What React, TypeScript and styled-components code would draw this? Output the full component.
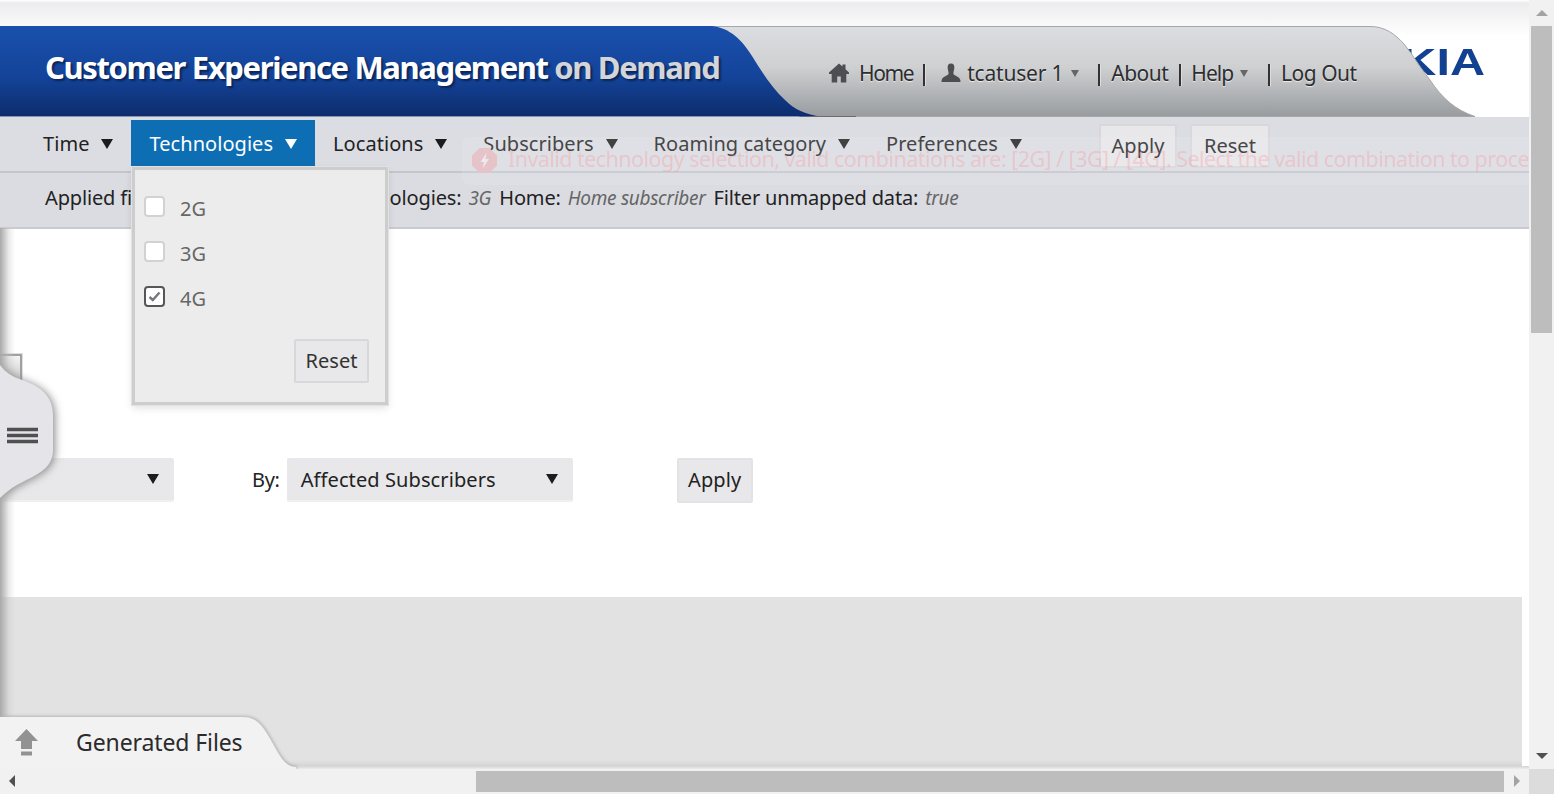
import React from "react";
import styled, { createGlobalStyle } from "styled-components";

const GlobalStyle = createGlobalStyle`
  html, body {
    margin: 0;
    padding: 0;
    overflow: hidden;
    background: #fff;
    font-family: "Noto Sans", "Open Sans", sans-serif;
  }
  * { box-sizing: border-box; }
`;

const Viewport = styled.div`
  width: 1554px;
  height: 794px;
  display: grid;
  grid-template-columns: 1529px 25px;
  grid-template-rows: 769px 25px;
`;

const Page = styled.div`
  position: relative;
  overflow: hidden;
  display: flex;
  flex-direction: column;
  background: linear-gradient(#fff 0, #ececee 3px, #fff 36px);
`;

const Header = styled.header`
  position: relative;
  height: 91px;
  margin-top: 26px;
  flex: none;
  display: flex;
`;

const HeaderArt = styled.svg`
  position: absolute;
  left: 0;
  top: 0;
  z-index: 1;
`;

const Logo = styled.div`
  position: absolute;
  right: 44px;
  top: 15px;
  font: bold 36px/44px "Liberation Sans", sans-serif;
  color: #124191;
  transform: scaleX(1.35);
  transform-origin: right center;
`;

const Title = styled.h1`
  position: relative;
  z-index: 2;
  margin: 19px 0 0 45px;
  width: 784px;
  font-size: 31px;
  line-height: 44px;
  font-weight: 700;
  letter-spacing: -1.37px;
  color: #fff;
  white-space: nowrap;
  text-shadow: 2px 2px 2px #0b2457;
  span { color: #d3d5d8; }
`;

const UserMenu = styled.nav`
  position: relative;
  z-index: 2;
  display: flex;
  align-items: center;
  height: 30px;
  margin-top: 32px;
  font-size: 21px;
  color: #2c2e30;
  text-shadow: 0 1px 1px #eee;
  white-space: nowrap;
`;

const UserLink = styled.span<{ $ml?: number; $ls?: number }>`
  margin-left: ${(p) => p.$ml ?? 0}px;
  letter-spacing: ${(p) => p.$ls ?? -0.5}px;
`;

const Pipe = styled.span<{ $ml: number }>`
  margin: 3px 0 0 ${(p) => p.$ml}px;
  width: 2px;
  height: 22px;
  background: #333;
  box-shadow: 1px 0 0 #ddd;
`;

const Caret = styled.span<{ $size?: number; $color?: string; $ml?: number }>`
  display: inline-block;
  flex: none;
  margin-left: ${(p) => p.$ml ?? 12}px;
  border-left: ${(p) => (p.$size ?? 12) / 2}px solid transparent;
  border-right: ${(p) => (p.$size ?? 12) / 2}px solid transparent;
  border-top: ${(p) => ((p.$size ?? 12) * 5) / 6}px solid ${(p) => p.$color ?? "#1c1c1c"};
`;

const NavBar = styled.div`
  flex: none;
  height: 56px;
  padding: 3px 0 0 25px;
  display: flex;
  align-items: flex-start;
  background: #dcdde2;
  border-bottom: 2px solid #c4c6cb;
`;

const NavItem = styled.div<{ $active?: boolean }>`
  height: 47px;
  padding: 0 18px;
  display: flex;
  align-items: center;
  font-size: 20px;
  letter-spacing: 0.05px;
  white-space: nowrap;
  color: ${(p) => (p.$active ? "#fff" : "#222")};
  background: ${(p) => (p.$active ? "#0d6eb3" : "transparent")};
`;

const NavButtons = styled.div`
  display: flex;
  gap: 13px;
  margin: 4px 0 0 59px;
`;

const Button = styled.div<{ $w: number; $h: number }>`
  width: ${(p) => p.$w}px;
  height: ${(p) => p.$h}px;
  padding-bottom: 2px;
  display: flex;
  align-items: center;
  justify-content: center;
  font-size: 20px;
  color: #222;
  background: #e8e7e9;
  border: 2px solid #d8d8da;
  border-radius: 2px;
`;

const FilterBar = styled.div`
  flex: none;
  height: 56px;
  padding: 0 0 5px 45px;
  display: flex;
  align-items: center;
  gap: 8px;
  font-size: 20px;
  letter-spacing: -0.15px;
  color: #222;
  white-space: nowrap;
  background: #dbdce1;
  border-bottom: 2px solid #c9cbd0;
`;

const FilterValue = styled.em<{ $ls?: number }>`
  margin-left: -1px;
  font-size: 19px;
  letter-spacing: ${(p) => p.$ls ?? -0.3}px;
  color: #666;
`;

const Toast = styled.div`
  position: absolute;
  left: 462px;
  top: 137px;
  width: 1100px;
  height: 48px;
  padding: 0 0 2px 10px;
  display: flex;
  align-items: center;
  gap: 11px;
  border-radius: 8px;
  font-size: 21.5px;
  letter-spacing: -0.55px;
  white-space: nowrap;
  color: rgba(253, 134, 143, 0.3);
  background: rgba(240, 240, 244, 0.18);
`;

const ToastText = styled.span`
  padding-bottom: 4px;
`;

const ToastBadge = styled.svg`
  flex: none;
`;

const Dropdown = styled.div`
  position: absolute;
  left: 132px;
  top: 167px;
  width: 256px;
  height: 238px;
  padding: 26px 0 0 9px;
  background: #ececec;
  border: 3px solid #cdcdcd;
  outline: 1px solid #e2e2e2;
  box-shadow: 0 3px 8px rgba(0, 0, 0, 0.12);
  z-index: 5;
`;

const CheckRow = styled.label`
  height: 45px;
  display: flex;
  align-items: flex-start;
  font-size: 20px;
  color: #666;
`;

const CheckBox = styled.span<{ $checked?: boolean }>`
  width: 21px;
  height: 21px;
  margin: 0 15px 0 0;
  display: flex;
  align-items: center;
  justify-content: center;
  border-radius: 4px;
  background: #fff;
  border: 2px solid ${(p) => (p.$checked ? "#55565a" : "#d2d2d4")};
`;

const CheckLabel = styled.span`
  line-height: 26px;
`;

const DropdownReset = styled(Button)`
  position: absolute;
  right: 16px;
  bottom: 19px;
  color: #333;
`;

const Content = styled.main`
  flex: 1;
  display: flex;
  flex-direction: column;
  padding-top: 125px;
`;

const StubBox = styled.div`
  flex: none;
  width: 22px;
  height: 30px;
  margin-bottom: 74px;
  border: 2px solid #a0a0a0;
  border-left: 0;
  outline: 1px solid #e0e0e0;
  background: linear-gradient(200deg, #f6f6f6, #bdbdbd);
`;

const ControlRow = styled.div`
  flex: none;
  display: flex;
  align-items: center;
  height: 44px;
  font-size: 20px;
  letter-spacing: 0.1px;
  color: #222;
`;

const Select = styled.div<{ $w: number }>`
  width: ${(p) => p.$w}px;
  height: 44px;
  padding: 0 15px 0 14px;
  display: flex;
  align-items: center;
  justify-content: space-between;
  background: #e8e7e9;
  border-bottom: 2px solid #efefef;
  border-radius: 2px;
`;

const ByLabel = styled.span`
  margin: 0 7px 0 78px;
  padding-bottom: 2px;
  letter-spacing: -0.3px;
`;

const RowApply = styled(Button)`
  margin-left: 104px;
  border-color: #e3e3e5;
`;

const ChartPanel = styled.section`
  flex: none;
  width: 1522px;
  height: 169px;
  margin-top: 95px;
  background: #e2e2e2;
  box-shadow: inset 0 -5px 4px -3px #d0d0d0;
`;

const BottomEdge = styled.div`
  height: 3px;
  background: linear-gradient(#d4d4d4, #ececec);
`;

const LeftShadow = styled.div`
  position: absolute;
  left: 0;
  top: 228px;
  width: 15px;
  height: 490px;
  background: linear-gradient(90deg, #a9a9a9, rgba(200, 200, 200, 0.35) 60%, transparent);
  z-index: 3;
`;

const SideHandle = styled.svg`
  position: absolute;
  left: 0;
  top: 355px;
  z-index: 4;
`;

const TabArt = styled.svg`
  position: absolute;
  left: 0;
  top: 714px;
  z-index: 4;
  filter: drop-shadow(1px -1px 1.5px #b4b4b4);
`;

const FilesTab = styled.div`
  position: absolute;
  left: 15px;
  top: 716px;
  height: 52px;
  display: flex;
  align-items: center;
  gap: 38px;
  font-size: 23px;
  letter-spacing: -0.1px;
  color: #2b2b2b;
  z-index: 5;
`;

const VScroll = styled.div`
  grid-row: 1;
  grid-column: 2;
  position: relative;
  background: #f1f1f1;
  padding: 26px 2px 0 2px;
`;

const HScroll = styled.div`
  grid-row: 2;
  grid-column: 1;
  background: #f1f1f1;
  display: flex;
  align-items: flex-start;
  padding: 2px 0 0 476px;
  position: relative;
`;

const ScrollThumbV = styled.div`
  height: 307px;
  background: #bdbdbd;
`;

const ScrollThumbH = styled.div`
  width: 1028px;
  height: 21px;
  background: #bdbdbd;
`;

const Corner = styled.div`
  grid-row: 2;
  grid-column: 2;
  background: #dcdcdc;
`;

const ScrollArrow = styled.span<{ $dir: "up" | "down" | "left" | "right"; $dim?: boolean }>`
  position: absolute;
  width: 0;
  height: 0;
  ${(p) => {
    const c = p.$dim ? "#a3a3a3" : "#505050";
    if (p.$dir === "up") return `left: 7px; top: 10px; border: 6px solid transparent; border-top: 0; border-bottom: 6px solid #a3a3a3;`;
    if (p.$dir === "down") return `left: 7px; bottom: 10px; border: 6px solid transparent; border-bottom: 0; border-top: 6px solid ${c};`;
    if (p.$dir === "left") return `left: 9px; top: 6px; border: 6px solid transparent; border-left: 0; border-right: 6px solid ${c};`;
    return `left: 1514px; top: 6px; border: 6px solid transparent; border-right: 0; border-left: 6px solid ${c};`;
  }}
`;

const IconSlot = styled.span<{ $mr: number }>`
  display: flex;
  flex: none;
  margin-right: ${(p) => p.$mr}px;
`;

const HomeIcon = () => (
  <svg width="20" height="20" viewBox="0 0 20 20">
    <path d="M10 .5 L13.5 3.6 V1.5 H16.5 V6.2 L20 9.6 V11 H17.3 V19.5 H11.8 V13.5 H8.2 V19.5 H2.7 V11 H0 V9.6 Z" fill="#4d4e51" />
  </svg>
);

const PersonIcon = () => (
  <svg width="20" height="20" viewBox="0 0 20 20">
    <path d="M10 0.5 C12.6 0.5 13.6 2.6 13.3 5.2 C13.1 7.4 12.4 8.8 12.4 10.5 C12.4 12.6 18.8 13.4 19.4 17.2 V19 H.6 V17.2 C1.2 13.4 7.6 12.6 7.6 10.5 C7.6 8.8 6.9 7.4 6.7 5.2 C6.4 2.6 7.4 0.5 10 0.5 Z" fill="#4d4e51" />
  </svg>
);

export default function App() {
  return (
    <>
      <GlobalStyle />
      <Viewport>
        <Page>
          <Header>
            <Logo>NOKIA</Logo>
            <HeaderArt width="1529" height="91" viewBox="0 0 1529 91">
              <defs>
                <linearGradient id="blue" x1="0" y1="0" x2="0" y2="1">
                  <stop offset="0" stopColor="#1a50ad" />
                  <stop offset="0.55" stopColor="#14449a" />
                  <stop offset="1" stopColor="#0d2c6c" />
                </linearGradient>
                <linearGradient id="grey" x1="0" y1="0" x2="0" y2="1">
                  <stop offset="0" stopColor="#dcdde0" />
                  <stop offset="0.45" stopColor="#cfd0d2" />
                  <stop offset="1" stopColor="#989c9f" />
                </linearGradient>
              </defs>
              <path
                d="M690 .5 H1370 C1385 .5 1395 8 1404 18 C1414 30 1420 42 1430 54 C1442 72 1455 84 1475 90.5 H800 Z"
                fill="url(#grey)"
                stroke="#a5a7a9"
              />
              <path d="M0 0 H712 C730 2 742 14 752 30 C762 46 772 62 785 74 C795 84 805 88 820 90.5 H0 Z" fill="url(#blue)" />
              <rect x="810" y="90" width="46" height="1" fill="#6b6d70" />
            </HeaderArt>
            <Title>
              Customer Experience Management <span>on Demand</span>
            </Title>
            <UserMenu>
              <IconSlot $mr={10}><HomeIcon /></IconSlot>
              <UserLink $ls={-1.4}>Home</UserLink>
              <Pipe $ml={10} />
              <UserLink $ml={16} />
              <IconSlot $mr={6}><PersonIcon /></IconSlot>
              <UserLink $ls={-0.2}>tcatuser 1</UserLink>
              <Caret $size={9} $color="#666" $ml={8} />
              <Pipe $ml={19} />
              <UserLink $ml={11}>About</UserLink>
              <Pipe $ml={11} />
              <UserLink $ml={10} $ls={-1}>Help</UserLink>
              <Caret $size={9} $color="#666" $ml={7} />
              <Pipe $ml={20} />
              <UserLink $ml={11}>Log Out</UserLink>
            </UserMenu>
          </Header>

          <NavBar>
            <NavItem>Time<Caret /></NavItem>
            <NavItem $active>Technologies<Caret $color="#fff" /></NavItem>
            <NavItem>Locations<Caret /></NavItem>
            <NavItem>Subscribers<Caret /></NavItem>
            <NavItem>Roaming category<Caret /></NavItem>
            <NavItem>Preferences<Caret /></NavItem>
            <NavButtons>
              <Button $w={78} $h={44}>Apply</Button>
              <Button $w={80} $h={44}>Reset</Button>
            </NavButtons>
          </NavBar>

          <FilterBar>
            <span>Applied filters:</span>
            <span>Time:</span>
            <FilterValue $ls={-0.95}>Last 7 days</FilterValue>
            <span>Technologies:</span>
            <FilterValue>3G</FilterValue>
            <span>Home:</span>
            <FilterValue>Home subscriber</FilterValue>
            <span>Filter unmapped data:</span>
            <FilterValue>true</FilterValue>
          </FilterBar>

          <Content>
            <StubBox />
            <ControlRow>
              <Select $w={174}>
                <span />
                <Caret />
              </Select>
              <ByLabel>By:</ByLabel>
              <Select $w={286}>
                <span>Affected Subscribers</span>
                <Caret />
              </Select>
              <RowApply $w={76} $h={45}>Apply</RowApply>
            </ControlRow>
            <ChartPanel />
            <BottomEdge />
          </Content>

          <Toast>
            <ToastBadge width="25" height="25" viewBox="0 0 25 25">
              <path d="M7.5 0 H17.5 L25 7.5 V17.5 L17.5 25 H7.5 L0 17.5 V7.5 Z" fill="#e6c3c9" />
              <path d="M14.5 5 L8.5 14 H12 L10.5 20.5 L17 11 H13.5 Z" fill="#eceaee" />
            </ToastBadge>
            <ToastText>
              Invalid technology selection, valid combinations are: [2G] / [3G] / [4G]. Select the valid combination to proceed
            </ToastText>
          </Toast>

          <Dropdown>
            <CheckRow><CheckBox /><CheckLabel>2G</CheckLabel></CheckRow>
            <CheckRow><CheckBox /><CheckLabel>3G</CheckLabel></CheckRow>
            <CheckRow>
              <CheckBox $checked>
                <svg width="13" height="11" viewBox="0 0 13 11">
                  <path d="M1.5 6 L4.8 9 L11.5 1.5" fill="none" stroke="#77787c" strokeWidth="2.4" />
                </svg>
              </CheckBox>
              <CheckLabel>4G</CheckLabel>
            </CheckRow>
            <DropdownReset $w={75} $h={44}>Reset</DropdownReset>
          </Dropdown>

          <LeftShadow />

          <SideHandle width="80" height="165" viewBox="0 0 80 165">
            <defs>
              <filter id="handleShadow" x="-30%" y="-10%" width="160%" height="120%">
                <feGaussianBlur stdDeviation="4" />
              </filter>
            </defs>
            <path
              d="M0 10 C6 18 12 21 17 23 C30 28 53 34 53 60 V95 C53 115 35 120 17 130 C10 134 5 138 0 143 Z"
              fill="#8c8c8c"
              filter="url(#handleShadow)"
              transform="translate(2 1)"
            />
            <path
              d="M0 10 C6 18 12 21 17 23 C30 28 53 34 53 60 V95 C53 115 35 120 17 130 C10 134 5 138 0 143 Z"
              fill="#e4e4e9"
            />
            <path d="M7 74.5 H38 M7 80.5 H38 M7 86.5 H38" stroke="#4f5052" strokeWidth="3.4" />
          </SideHandle>

          <TabArt width="320" height="56" viewBox="0 0 320 56">
            <path d="M0 3 H243 C258 3 264 14 272 28 C280 42 285 53 296 53 V56 H0 Z" fill="#f2f2f2" />
          </TabArt>

          <FilesTab>
            <svg width="23" height="27" viewBox="0 0 23 27">
              <path d="M11.5 0 L23 12 H17 V20 H6 V12 H0 Z" fill="#929292" />
              <rect x="6" y="22.5" width="11" height="4" fill="#929292" />
            </svg>
            Generated Files
          </FilesTab>
        </Page>

        <VScroll>
          <ScrollArrow $dir="up" />
          <ScrollThumbV />
          <ScrollArrow $dir="down" />
        </VScroll>

        <HScroll>
          <ScrollArrow $dir="left" />
          <ScrollThumbH />
          <ScrollArrow $dir="right" $dim />
        </HScroll>

        <Corner />
      </Viewport>
    </>
  );
}
